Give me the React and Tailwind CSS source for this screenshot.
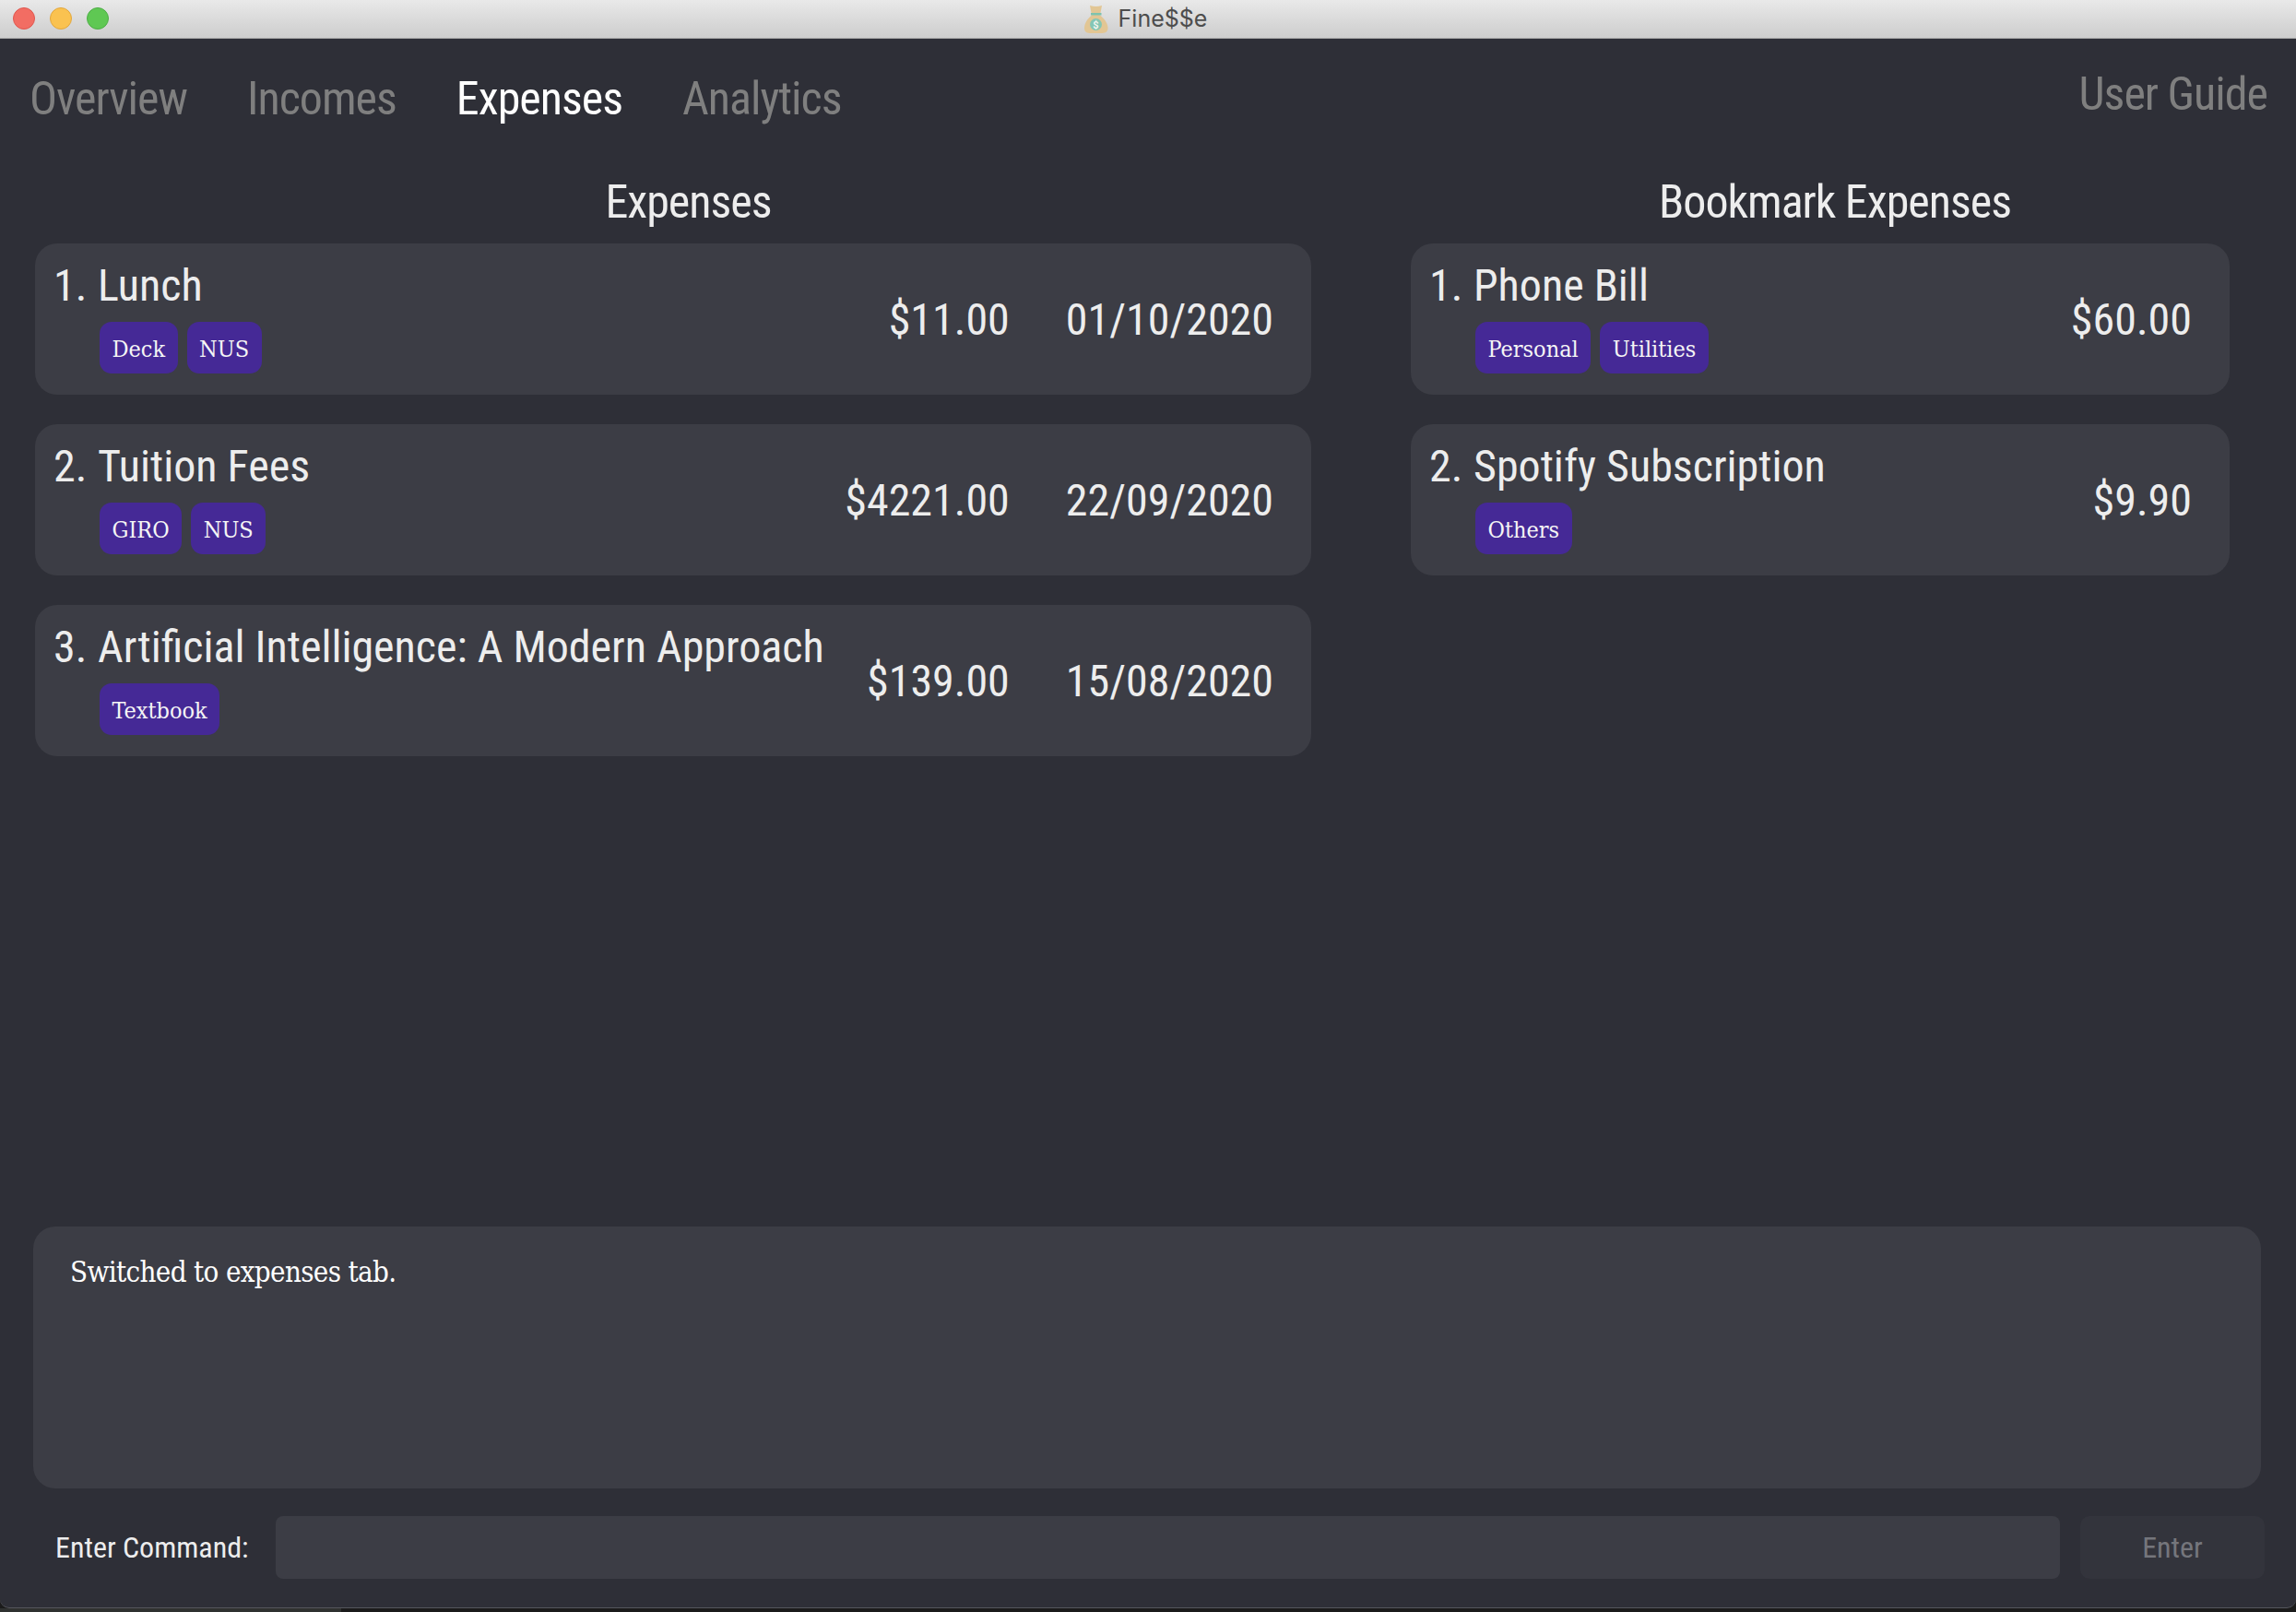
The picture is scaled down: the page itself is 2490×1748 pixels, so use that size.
const cond = "font-['Roboto_Condensed','Roboto',sans-serif] [font-stretch:75%]";
const big = `${cond} text-[50px] tracking-[-1px]`;
const serif = "font-['DejaVu_Serif_Condensed','DejaVu_Serif',serif]";

function Tag({ children }) {
  return (
    <span className={`flex h-[56px] items-center rounded-[13px] bg-[#452996] px-[13.5px] pt-[3px] text-[25px] text-[#f5f5f5] ${serif}`}>
      {children}
    </span>
  );
}

function Card({ n, title, tags, amount, date }) {
  return (
    <div className="flex h-[164px] items-center rounded-[24px] bg-[#3c3d45] pl-[20px] pr-[41px] text-[#ededed]">
      <div className="flex-1 pb-[4px]">
        <div className={`flex h-[54px] items-center text-[48px] ${cond}`}>
          <span className="w-[48px]">{n}.</span>
          <span className="whitespace-nowrap">{title}</span>
        </div>
        <div className="mt-[12px] ml-[50px] flex gap-[10px]">
          {tags.map((t) => (
            <Tag key={t}>{t}</Tag>
          ))}
        </div>
      </div>
      <span className={`pt-[2px] text-[48px] whitespace-nowrap ${cond}`}>{amount}</span>
      {date && <span className={`ml-[61px] pt-[2px] text-[48px] whitespace-nowrap ${cond}`}>{date}</span>}
    </div>
  );
}

function Bag() {
  return (
    <svg width="28" height="32" viewBox="0 0 28 32">
      <path d="M7 1 Q13.5 3 20 1 L18.5 9 L8.5 9 Z" fill="#e2c694" />
      <path d="M9.5 11 C4 15.5 1 20.5 1 25.5 C1 30 4 31 8 31 L19 31 C23 31 26.5 30 26.5 25.5 C26.5 20.5 23 15.5 17.5 11 Z" fill="#e2c694" />
      <rect x="8" y="9" width="11.5" height="2.5" fill="#7ec3ae" />
      <circle cx="13.5" cy="21.5" r="6.5" fill="#84c6b4" />
      <text x="13.5" y="25.5" textAnchor="middle" fontSize="11" fontWeight="700" fill="#f2f5ef" fontFamily="Roboto, sans-serif">$</text>
    </svg>
  );
}

export default function App() {
  return (
    <div className="flex h-[1748px] w-[2490px] flex-col overflow-hidden bg-[#1b1b1b]">
      <div className="flex h-[1744px] shrink-0 flex-col overflow-hidden rounded-b-[10px] border-b border-[#55565c] bg-[#2e2f37]">
        <div className="relative flex h-[42px] shrink-0 items-center justify-center border-b border-[#a9a9a9] bg-gradient-to-b from-[#e9e9e9] to-[#cdcdcd]">
          <div className="absolute top-[8px] left-[14px] flex gap-[16px]">
            <span className="size-[24px] rounded-full border border-[#e0564e] bg-[#f26d63]" />
            <span className="size-[24px] rounded-full border border-[#e3a73c] bg-[#fac250]" />
            <span className="size-[24px] rounded-full border border-[#4dae46] bg-[#5fc853]" />
          </div>
          <div className="flex items-center gap-[10px] pr-[6px]">
            <Bag />
            <span className="font-['Inter',sans-serif] text-[25px] text-[#4d4d4d]">Fine$$e</span>
          </div>
        </div>

        <div className={`flex h-[112px] shrink-0 items-center justify-between pt-[18px] pr-[31px] pl-[32px] text-[#7f7f7f] ${big}`}>
          <div className="flex gap-[65px]">
            <span>Overview</span>
            <span>Incomes</span>
            <span className="text-white">Expenses</span>
            <span>Analytics</span>
          </div>
          <span className="mb-[10px]">User Guide</span>
        </div>

        <div className="flex h-[1176px] shrink-0 gap-[75px] pl-[38px]">
          <div className="w-[1417px]">
            <h2 className={`flex h-[110px] items-center justify-center pt-[20px] text-[#ededed] ${big}`}>Expenses</h2>
            <div className="flex w-[1384px] flex-col gap-[32px]">
              <Card n="1" title="Lunch" tags={["Deck", "NUS"]} amount="$11.00" date="01/10/2020" />
              <Card n="2" title="Tuition Fees" tags={["GIRO", "NUS"]} amount="$4221.00" date="22/09/2020" />
              <Card n="3" title="Artificial Intelligence: A Modern Approach" tags={["Textbook"]} amount="$139.00" date="15/08/2020" />
            </div>
          </div>
          <div className="w-[920px]">
            <h2 className={`flex h-[110px] items-center justify-center pt-[20px] text-[#ededed] ${big}`}>Bookmark Expenses</h2>
            <div className="flex w-[888px] flex-col gap-[32px]">
              <Card n="1" title="Phone Bill" tags={["Personal", "Utilities"]} amount="$60.00" />
              <Card n="2" title="Spotify Subscription" tags={["Others"]} amount="$9.90" />
            </div>
          </div>
        </div>

        <div className="mr-[38px] ml-[36px] h-[284px] shrink-0 rounded-[24px] bg-[#3c3d45] px-[40px] pt-[26px]">
          <p className={`text-[31px] tracking-[-0.65px] text-white ${serif}`}>Switched to expenses tab.</p>
        </div>

        <div className="mt-[30px] flex h-[68px] shrink-0 items-center pr-[34px] pl-[60px]">
          <span className={`w-[239px] text-[32px] text-[#ededed] ${cond}`}>Enter Command:</span>
          <div className="h-full flex-1 rounded-[8px] bg-[#3c3d45]" />
          <button className={`ml-[22px] h-full w-[200px] rounded-[10px] bg-[#33343c] text-[32px] text-[#75767c] ${cond}`}>Enter</button>
        </div>
      </div>
      <div className="h-[4px] w-[370px] shrink-0 bg-[#2f3130]" />
    </div>
  );
}
